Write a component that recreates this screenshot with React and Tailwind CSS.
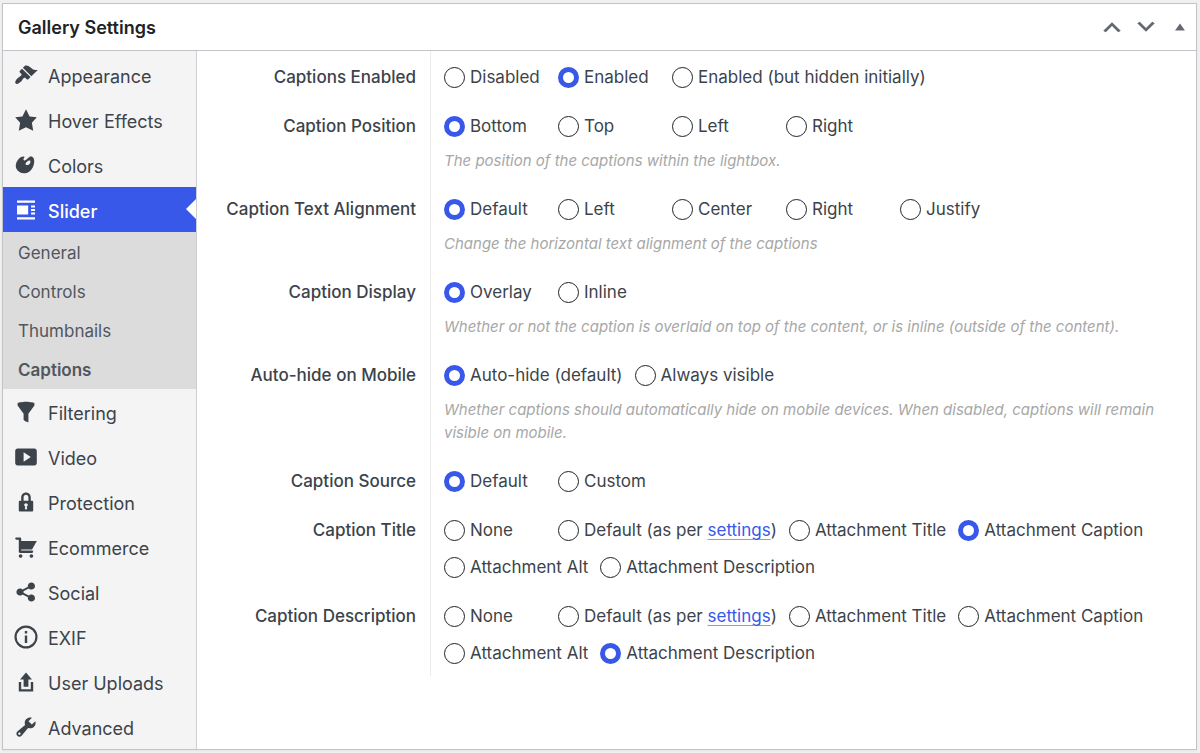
import React from "react";

const icons = {
  appearance:
    "M14.48 11.06L7.41 3.99l1.5-1.5c.5-.56 2.3-.47 3.51.32 1.21.8 1.43 1.28 2.91 2.1 1.18.64 2.45 1.26 4.45.85zm-.71.71L6.7 4.7 4.93 6.47c-.39.39-.39 1.02 0 1.41l1.06 1.06c.39.39.39 1.03 0 1.42-.6.6-1.43 1.11-2.21 1.69-.35.26-.7.53-1.01.84C1.43 14.23.4 16.08 1.4 17.07c.99 1 2.84-.03 4.18-1.36.31-.31.58-.66.85-1.02.57-.78 1.08-1.61 1.69-2.21.39-.39 1.02-.39 1.41 0l1.06 1.06c.39.39 1.02.39 1.41 0z",
  star: "M10 1l3 6 6 .75-4.12 4.62L16 19l-6-3-6 3 1.13-6.63L1 7.75 7 7z",
  art: "M8.55 3.06c1.01.34-1.95 2.01-.1 3.13 1.04.63 3.31-2.22 4.45-2.86.97-.54 2.67-.65 3.53 1.23 1.09 2.38.14 8.57-3.79 11.06-3.97 2.5-8.97 1.23-10.7-2.66-2.01-4.53 3.12-11.09 6.61-9.9zm1.21 6.45c.73 1.64 4.7-.5 3.79-2.8-.59-1.49-4.48 1.25-3.79 2.8z",
  slider:
    "M2.5 2.1h15v1.8h-15zM2.5 6.2h9.3v7.6H2.5zM14.2 6.2h3.3v1.7h-3.3zM14.2 9.2h3.3v1.6h-3.3zM14.2 12.1h3.3v1.7h-3.3zM2.5 16.1h15v1.8h-15z",
  filter:
    "M3 4.5v-2s3.34-1 7-1 7 1 7 1v2l-5 7.03v6.97s-1.22-.09-2.25-.59S8 16.5 8 16.5v-4.97z",
  video:
    "M19 15V5c0-1.1-.9-2-2-2H3c-1.1 0-2 .9-2 2v10c0 1.1.9 2 2 2h14c1.1 0 2-.9 2-2zM8 14V6l6 4z",
  lock: "M14 9h1c.55 0 1 .45 1 1v7c0 .55-.45 1-1 1H5c-.55 0-1-.45-1-1v-7c0-.55.45-1 1-1h1V6c0-2.21 1.79-4 4-4s4 1.79 4 4v3zm-2 0V6c0-1.1-.9-2-2-2s-2 .9-2 2v3h4zm-1 7l-.36-2.15c.51-.24.86-.75.86-1.35 0-.83-.67-1.5-1.5-1.5s-1.5.67-1.5 1.5c0 .6.35 1.11.86 1.35L9 16h2z",
  cart: "M6 13h9c.55 0 1 .45 1 1s-.45 1-1 1H5c-.55 0-1-.45-1-1V4H2c-.55 0-1-.45-1-1s.45-1 1-1h3c.55 0 1 .45 1 1v2h13l-4 7H6v1zm-.5 3c.83 0 1.5.67 1.5 1.5S6.33 19 5.5 19 4 18.33 4 17.5 4.67 16 5.5 16zm9 0c.83 0 1.5.67 1.5 1.5s-.67 1.5-1.5 1.5-1.5-.67-1.5-1.5.67-1.5 1.5-1.5z",
  share:
    "M14.5 12c1.66 0 3 1.34 3 3s-1.34 3-3 3-3-1.34-3-3c0-.24.03-.46.09-.69l-4.38-2.3c-.55.61-1.33.99-2.21.99-1.66 0-3-1.34-3-3s1.34-3 3-3c.88 0 1.66.39 2.21.99l4.38-2.3c-.06-.23-.09-.45-.09-.69 0-1.66 1.34-3 3-3s3 1.34 3 3-1.34 3-3 3c-.88 0-1.66-.39-2.21-.99l-4.38 2.3c.06.23.09.45.09.69s-.03.46-.09.69l4.38 2.3c.55-.61 1.33-.99 2.21-.99z",
  info: "M10 .4a9.6 9.6 0 1 0 0 19.2A9.6 9.6 0 0 0 10 .4zm0 1.8a7.8 7.8 0 1 1 0 15.6 7.8 7.8 0 0 1 0-15.6zM9 5h2v2H9zM9 8.8h2V15H9z",
  upload: "M8 14V8H5l5-6 5 6h-3v6H8zm-2 2v-6H4v8h12.01v-8H14v6H6z",
  tools:
    "M16.68 9.77c-1.34 1.34-3.3 1.67-4.95.99l-5.41 6.52c-.99.99-2.59.99-3.58 0s-.99-2.59 0-3.57l6.52-5.42c-.68-1.65-.35-3.61.99-4.95 1.28-1.28 3.12-1.62 4.72-1.06l-2.89 2.89 2.82 2.82 2.86-2.87c.53 1.58.18 3.39-1.08 4.65zM3.81 16.21c.4.39 1.04.39 1.43 0 .4-.4.4-1.04 0-1.43-.39-.4-1.03-.4-1.43 0-.39.39-.39 1.03 0 1.43z",
  up: "M15.2 14.4L10 9.2l-5.2 5.2-2.1-1.2L10 6l7.3 7.2z",
  down: "M4.8 5.6l5.2 5.2 5.2-5.2 2.1 1.2L10 14 2.7 6.8z",
  toggle: "M4.5 14L10 6l5.5 8z",
};

function Icon({ name, className }) {
  return (
    <svg viewBox="0 0 20 20" fill="currentColor" fillRule="evenodd" aria-hidden="true" className={className}>
      <path d={icons[name]} />
    </svg>
  );
}

const tabs = [
  { label: "Appearance", icon: "appearance" },
  { label: "Hover Effects", icon: "star" },
  { label: "Colors", icon: "art" },
  {
    label: "Slider",
    icon: "slider",
    active: true,
    children: ["General", "Controls", "Thumbnails", "Captions"],
  },
  { label: "Filtering", icon: "filter" },
  { label: "Video", icon: "video" },
  { label: "Protection", icon: "lock" },
  { label: "Ecommerce", icon: "cart" },
  { label: "Social", icon: "share" },
  { label: "EXIF", icon: "info" },
  { label: "User Uploads", icon: "upload" },
  { label: "Advanced", icon: "tools" },
];

const settingsText = (
  <>
    Default (as per{" "}
    <a href="#settings" className="text-[#3858e9] underline decoration-[#3858e9]/60 decoration-1 underline-offset-[3px]">
      settings
    </a>
    )
  </>
);

const sources = [
  "None",
  settingsText,
  "Attachment Title",
  "Attachment Caption",
  "Attachment Alt",
  "Attachment Description",
];

const fields = [
  { id: "enabled", label: "Captions Enabled", options: ["Disabled", "Enabled", "Enabled (but hidden initially)"], value: 1 },
  {
    id: "position",
    label: "Caption Position",
    options: ["Bottom", "Top", "Left", "Right"],
    value: 0,
    help: "The position of the captions within the lightbox.",
  },
  {
    id: "alignment",
    label: "Caption Text Alignment",
    options: ["Default", "Left", "Center", "Right", "Justify"],
    value: 0,
    help: "Change the horizontal text alignment of the captions",
  },
  {
    id: "display",
    label: "Caption Display",
    options: ["Overlay", "Inline"],
    value: 0,
    help: "Whether or not the caption is overlaid on top of the content, or is inline (outside of the content).",
  },
  {
    id: "autohide",
    label: "Auto-hide on Mobile",
    options: ["Auto-hide (default)", "Always visible"],
    value: 0,
    help: "Whether captions should automatically hide on mobile devices. When disabled, captions will remain visible on mobile.",
  },
  { id: "source", label: "Caption Source", options: ["Default", "Custom"], value: 0 },
  { id: "title", label: "Caption Title", options: sources, value: 3 },
  { id: "description", label: "Caption Description", options: sources, value: 5 },
];

function Tab({ tab }) {
  return (
    <li>
      <a
        href="#tab"
        className={
          tab.active
            ? "relative flex h-[45px] items-center gap-[10px] bg-[#3858e9] pl-[11px] font-medium text-white"
            : "flex h-[45px] items-center gap-[10px] pl-[11px]"
        }
      >
        <Icon name={tab.icon} className="size-6 shrink-0" />
        <span className="pt-[5px]">{tab.label}</span>
        {tab.active && (
          <svg viewBox="0 0 10 20" className="absolute right-0 top-3 h-5 w-[10px] text-white" aria-hidden="true">
            <path d="M10 0v20L0 10z" fill="currentColor" />
          </svg>
        )}
      </a>
      {tab.children && (
        <ul className="bg-[#dcdcdc] pt-px text-[17px] text-[#50575e]">
          {tab.children.map((child) => (
            <li key={child}>
              <a
                href="#section"
                className={
                  child === "Captions"
                    ? "flex h-[39px] items-center pt-[2px] pl-[15px] font-semibold"
                    : "flex h-[39px] items-center pt-[2px] pl-[15px]"
                }
              >
                {child}
              </a>
            </li>
          ))}
        </ul>
      )}
    </li>
  );
}

function Field({ field }) {
  return (
    <div role="radiogroup" aria-labelledby={field.id} className="flex text-[17px] leading-6">
      <div id={field.id} className="w-[233px] shrink-0 pt-[14px] pr-[14px] text-right font-medium">
        {field.label}
      </div>
      <div className="min-w-0 flex-1 border-l border-[#ececec] pt-[14px] pr-4 pb-[11px] pl-[13px]">
        <div className="flex flex-wrap gap-x-3 gap-y-[13px]">
          {field.options.map((option, i) => (
            <label key={i} className="flex min-w-[102px] items-center gap-[5px]">
              <input
                type="radio"
                name={field.id}
                defaultChecked={i === field.value}
                className="size-[21px] shrink-0 appearance-none rounded-full border border-[#1d2327] bg-white checked:border-[5px] checked:border-[#3858e9]"
              />
              <span>{option}</span>
            </label>
          ))}
        </div>
        {field.help && (
          <p className="mt-[11px] text-[15px] leading-[23px] text-[#a7a7a7] italic">{field.help}</p>
        )}
      </div>
    </div>
  );
}

export default function App() {
  return (
    <div className="min-h-screen bg-[#f0f0f1] pt-[3px] pr-[3px] pb-[2px] pl-[2px] font-['Inter',sans-serif] text-[#3c434a]">
      <section className="border border-[#c3c4c7] bg-white shadow-xs">
        <header className="flex h-[47px] items-center justify-between border-b border-[#c3c4c7] pr-[6px] pl-[15px]">
          <h2 className="pt-[2px] text-lg font-semibold text-[#1d2327]">Gallery Settings</h2>
          <div className="flex items-center text-[#646970]">
            <button type="button" aria-label="Move up" className="flex w-[34px] justify-center">
              <Icon name="up" className="size-6" />
            </button>
            <button type="button" aria-label="Move down" className="flex w-[34px] justify-center">
              <Icon name="down" className="size-6" />
            </button>
            <button type="button" aria-label="Toggle panel" className="ml-[7px] flex w-5 justify-center">
              <Icon name="toggle" className="size-[18px]" />
            </button>
          </div>
        </header>
        <div className="flex">
          <nav className="w-[194px] shrink-0 border-r border-[#ccd0d4] bg-[#f4f4f4] pt-px text-lg">
            <ul>
              {tabs.map((tab) => (
                <Tab key={tab.label} tab={tab} />
              ))}
            </ul>
          </nav>
          <form className="min-w-0 flex-1">
            {fields.map((field) => (
              <Field key={field.id} field={field} />
            ))}
          </form>
        </div>
      </section>
    </div>
  );
}
